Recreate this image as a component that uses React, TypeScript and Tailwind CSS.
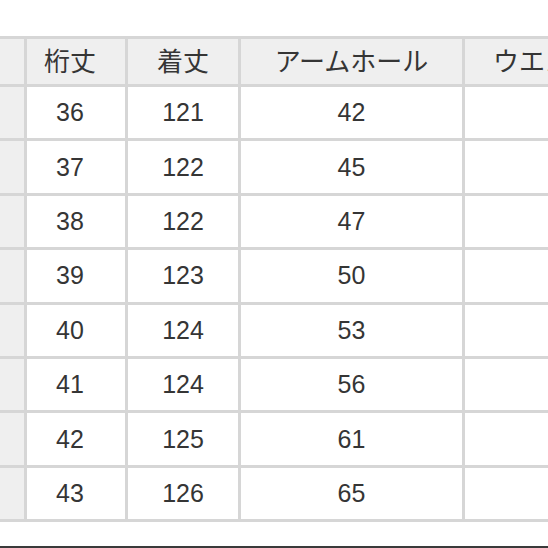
import React from "react"

const rows = [
  ["36", "121", "42"],
  ["37", "122", "45"],
  ["38", "122", "47"],
  ["39", "123", "50"],
  ["40", "124", "53"],
  ["41", "124", "56"],
  ["42", "125", "61"],
  ["43", "126", "65"],
]

const headers = ["桁丈", "着丈", "アームホール", "ウエスト"]

export default function App() {
  return (
    <div
      className="w-[548px] h-[548px] overflow-hidden bg-white text-[#353535]"
      style={{ fontFamily: '"Liberation Sans", "Noto Sans CJK JP", sans-serif' }}
    >
      <div className="pt-[36px]">
        <div className="grid w-max grid-cols-[24px_98px_110px_221px_160px] grid-rows-[45px_repeat(8,51.4px)] gap-[3px] bg-[#d6d6d6] py-[3px] pr-[3px]">
          {/* header */}
          <div className="bg-[#efefef]" />
          {headers.map((h, i) => (
            <div
              key={h}
              className={
                "flex items-center justify-center bg-[#efefef] text-[26px] leading-none" +
                (i === 0 ? " pr-[12px]" : "")
              }
            >
              {h}
            </div>
          ))}

          {rows.map((r, ri) => (
            <React.Fragment key={ri}>
              <div className="bg-[#efefef]" />
              <div className="flex items-center justify-center bg-white pr-[12px] text-[25px] leading-none">
                {r[0]}
              </div>
              <div className="flex items-center justify-center bg-white text-[25px] leading-none">
                {r[1]}
              </div>
              <div className="flex items-center justify-center bg-white text-[25px] leading-none">
                {r[2]}
              </div>
              <div className="bg-white" />
            </React.Fragment>
          ))}
        </div>
        <div className="mt-[24px] h-[3px] w-full bg-[#3a3a3a]" />
      </div>
    </div>
  )
}
